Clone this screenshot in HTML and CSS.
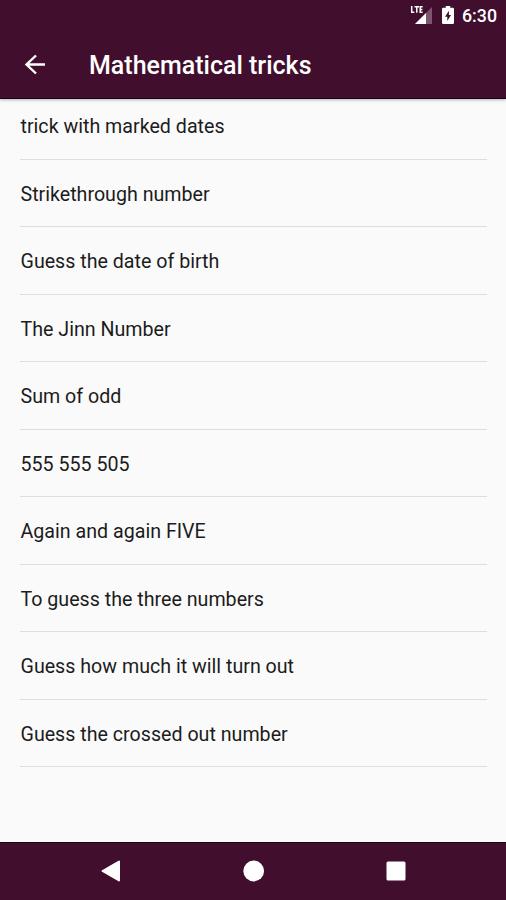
FILE: index.html
```html
<!DOCTYPE html>
<html lang="en">
<head>
  <meta charset="UTF-8">
  <meta name="viewport" content="width=device-width, initial-scale=1.0">
  <title>Mathematical tricks</title>
  <link rel="stylesheet" href="styles.css">
</head>
<body>
  <div class="screen">
    <header class="header">
      <div class="status-bar">
        <svg class="signal" width="23" height="20" viewBox="0 0 23 20">
          <path d="M22 3v17H5z" fill="#fff" opacity=".3"/>
          <path d="M16 9v11H5z" fill="#fff"/>
          <path d="M1.700 2v6.200h2.600M4.500 2.700h4.500M6.800 2.700v6M12.700 2.700h-2.500v5.500h2.500M10.200 5.400h2.200" fill="none" stroke="#fff" stroke-width="1.500"/>
        </svg>
        <svg class="battery" width="12" height="18" viewBox="0 0 12 18">
          <path fill="#fff" fill-rule="evenodd" d="M3.8 0h4.4v1.8h2.6q1.2 0 1.2 1.2v13.8q0 1.2-1.2 1.2H1.2Q0 18 0 16.800V3q0-1.200 1.200-1.200h2.600zM6.900 4.800L3 10.800h2.300v4.200L9 9H6.900z"/>
        </svg>
        <span class="clock">6:30</span>
      </div>
      <div class="toolbar">
        <svg class="back" width="22" height="22" viewBox="0 0 22 22">
          <path d="M21 10.500H3M12 1.500L2.500 10.500l9.500 9" fill="none" stroke="#fff" stroke-width="2.400"/>
        </svg>
        <h1 class="title">Mathematical tricks</h1>
      </div>
    </header>

    <main class="content">
      <ul class="list">
        <li class="item">trick with marked dates</li>
        <li class="item">Strikethrough number</li>
        <li class="item">Guess the date of birth</li>
        <li class="item">The Jinn Number</li>
        <li class="item">Sum of odd</li>
        <li class="item">555 555 505</li>
        <li class="item">Again and again FIVE</li>
        <li class="item">To guess the three numbers</li>
        <li class="item">Guess how much it will turn out</li>
        <li class="item">Guess the crossed out number</li>
      </ul>
    </main>

    <nav class="nav-bar">
      <svg width="22" height="24" viewBox="0 0 22 24">
        <path d="M18 2.500v19L1.500 12z" fill="#fff" stroke="#fff" stroke-width="2" stroke-linejoin="round"/>
      </svg>
      <svg width="22" height="22" viewBox="0 0 22 22">
        <circle cx="10.700" cy="11" r="10.400" fill="#fff"/>
      </svg>
      <svg width="22" height="22" viewBox="0 0 22 22">
        <rect x="1.500" y="1.500" width="19" height="19" rx="1.500" fill="#fff"/>
      </svg>
    </nav>
  </div>
</body>
</html>
```
FILE: styles.css
```css
body {
  margin: 0;
  font-family: Roboto, sans-serif;
}

.screen {
  display: flex;
  flex-direction: column;
  height: 900px;
  background: #fafafa;
  overflow: hidden;
}

.header {
  height: 99px;
  flex: none;
  background: #420e2d;
  color: #fff;
  border-bottom: 1px solid #210014;
  box-sizing: border-box;
  box-shadow: 0 1px 3px rgba(40, 60, 70, 0.35);
  z-index: 1;
}

.status-bar {
  display: flex;
  justify-content: flex-end;
  height: 32px;
  padding-right: 9px;
}

.signal {
  margin-top: 4px;
  margin-right: 9px;
}

.battery {
  margin-top: 6px;
  margin-right: 8px;
}

.clock {
  font-size: 17.8px;
  font-weight: 500;
  line-height: 32px;
}

.toolbar {
  display: flex;
  align-items: center;
  height: 66px;
  padding-left: 24px;
}

.title {
  margin: 2px 0 0 43px;
  font-size: 25px;
  font-weight: 500;
  line-height: 30px;
}

.content {
  flex: 1;
  min-height: 0;
}

.list {
  margin: -7px 19px 0 20px;
  padding: 0;
  list-style: none;
}

.item {
  height: 67.5px;
  box-sizing: border-box;
  border-bottom: 1px solid #dedede;
  font-size: 19.65px;
  line-height: 70px;
  text-indent: 0.5px;
  color: #1c1c1c;
}

.nav-bar {
  display: flex;
  align-items: center;
  gap: 120px;
  height: 58px;
  flex: none;
  box-sizing: border-box;
  padding: 0 0 1px 101px;
  background: #420e2d;
  border-top: 1px solid #210014;
}
```
